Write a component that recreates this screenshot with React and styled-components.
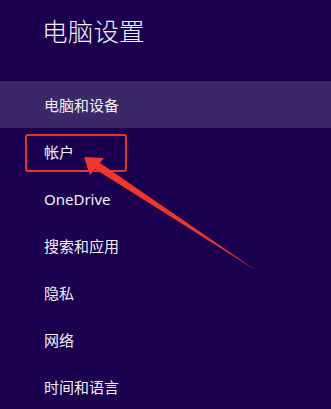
import styled, { createGlobalStyle } from "styled-components";

const Global = createGlobalStyle`
  html, body {
    margin: 0;
    padding: 0;
    background: #1b0050;
  }
`;

const Page = styled.div`
  position: relative;
  width: 331px;
  height: 409px;
  overflow: hidden;
  background: #1b0050;
  font-family: "Segoe UI", "Noto Sans", "Noto Sans CJK SC", sans-serif;
  color: #f2f0f8;
`;

const Title = styled.h1`
  margin: 0;
  padding: 13px 0 0 42px;
  height: 65px;
  box-sizing: border-box;
  font-size: 25.5px;
  font-weight: 300;
  line-height: 34px;
  letter-spacing: 0.2px;
  font-family: "Noto Sans CJK SC", sans-serif;
`;

const Menu = styled.ul`
  list-style: none;
  margin: 16px 0 0;
  padding: 0;
`;

const Item = styled.li`
  height: 47px;
  display: flex;
  align-items: center;
  padding-left: 44px;
  font-size: 15px;
  font-family: "Noto Sans", "Noto Sans CJK SC", sans-serif;
  background: ${(p) => (p.active ? "#3a2868" : "transparent")};
`;

const Highlight = styled.div`
  position: absolute;
  left: 25px;
  top: 134px;
  width: 98px;
  height: 34px;
  border: 2px solid #e5322c;
  border-radius: 3px;
`;

const Arrow = styled.svg`
  position: absolute;
  left: 0;
  top: 0;
  pointer-events: none;
`;

const items = [
  "电脑和设备",
  "帐户",
  "OneDrive",
  "搜索和应用",
  "隐私",
  "网络",
  "时间和语言",
];

export default function App() {
  return (
    <Page>
      <Global />
      <Title>电脑设置</Title>
      <Menu>
        {items.map((t, i) => (
          <Item key={t} active={i === 0}>
            {t}
          </Item>
        ))}
      </Menu>
      <Highlight />
      <Arrow width="331" height="409" viewBox="0 0 331 409">
        <polygon
          points="84,157 104,158 100,163 257,271 95,169 90,175"
          fill="#f0362a"
        />
      </Arrow>
    </Page>
  );
}
